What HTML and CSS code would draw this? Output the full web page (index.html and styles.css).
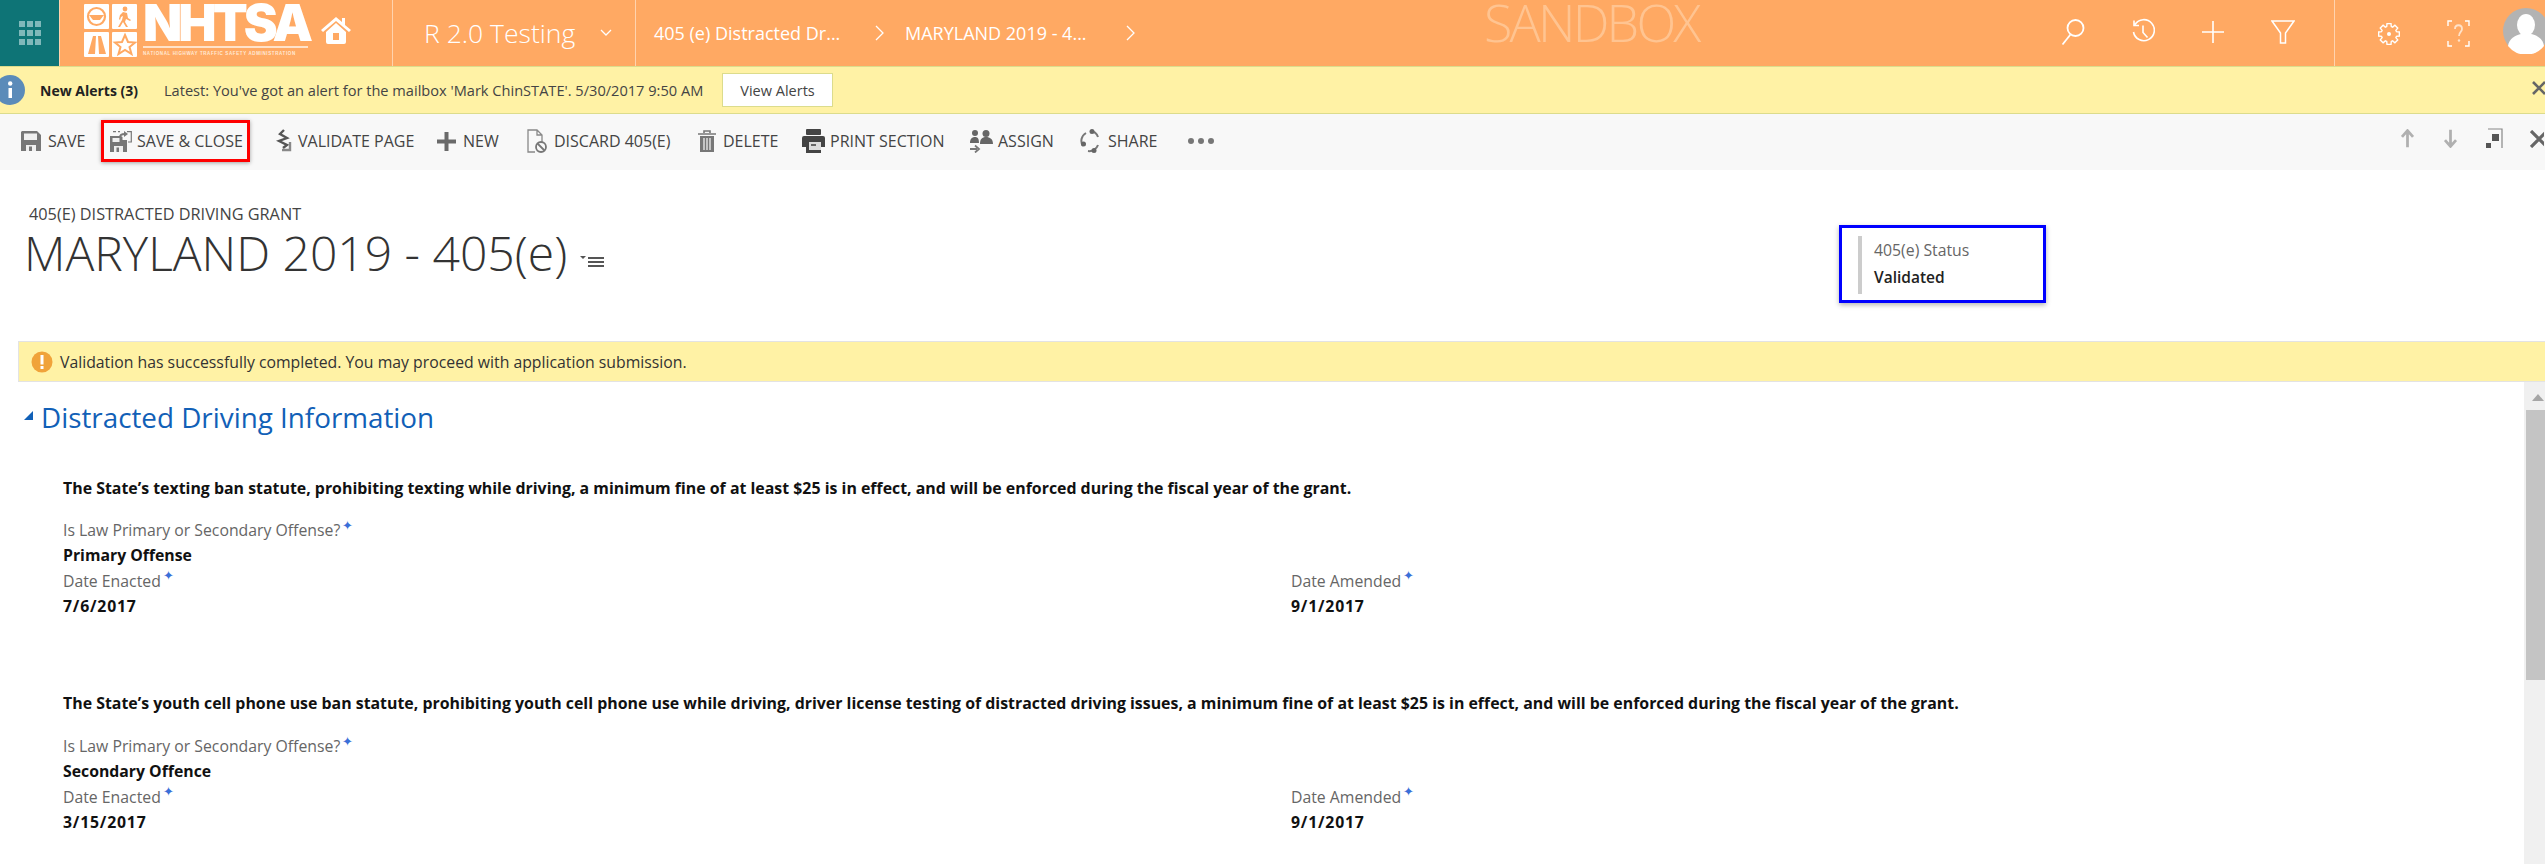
FILE: index.html
```html
<!DOCTYPE html>
<html lang="en">
<head>
    <meta charset="UTF-8">
    <title>MARYLAND 2019 - 405(e)</title>
    <link rel="stylesheet" href="styles.css">
</head>
<body>
    <header class="top-bar">
        <div class="app-tile">
            <svg width="22" height="24" viewBox="0 0 22 24" fill="#7fb8ba">
                <rect x="0" y="0" width="6" height="6"/><rect x="8" y="0" width="6" height="6"/><rect x="16" y="0" width="6" height="6"/>
                <rect x="0" y="9" width="6" height="6"/><rect x="8" y="9" width="6" height="6"/><rect x="16" y="9" width="6" height="6"/>
                <rect x="0" y="18" width="6" height="6"/><rect x="8" y="18" width="6" height="6"/><rect x="16" y="18" width="6" height="6"/>
            </svg>
        </div>
        <div class="logo-area">
            <svg class="logo-signs" width="53" height="53" viewBox="0 0 53 53">
                <rect width="25" height="25" rx="1" fill="#fff"/>
                <rect x="28" width="25" height="25" rx="1" fill="#fff"/>
                <rect y="28" width="25" height="25" rx="1" fill="#fff"/>
                <rect x="28" y="28" width="25" height="25" rx="1" fill="#fff"/>
                <circle cx="12.5" cy="12.5" r="8.5" fill="none" stroke="#ffa963" stroke-width="2.2"/>
                <path d="M5 11h15l-4 5h-7z" fill="#ffa963"/>
                <circle cx="41" cy="5" r="2.4" fill="#ffa963"/>
                <path d="M39 8l4 1 1 5 3 2-1 1-4-2-1 3 3 5h-2l-3-5-3 5h-2l4-7 1-4-2 1-1 3-1-1 1-4z" fill="#ffa963"/>
                <path d="M9 32h3l-1 18H4zM14 32h3l5 18h-7z" fill="#ffa963"/>
                <path d="M41 31l3 7 7 .5-5.500 4.500 2 7-6.500-4-6.500 4 2-7-5.500-4.500 7-.5z" fill="none" stroke="#ffa963" stroke-width="2"/>
            </svg>
            <div class="logo-word">
                <div class="logo-name">NHTSA</div>
                <div class="logo-full">NATIONAL HIGHWAY TRAFFIC SAFETY ADMINISTRATION</div>
            </div>
            <svg class="logo-home" width="32" height="30" viewBox="0 0 32 30">
                <path d="M1 15L16 2l6 5V3h3v7l6 5-2 2L16 6 3 17z" fill="#fff"/>
                <path d="M6 17L16 8l10 9v10a2 2 0 0 1-2 2H8a2 2 0 0 1-2-2zM13 18v7h6v-7z" fill="#fff" fill-rule="evenodd"/>
            </svg>
        </div>
        <div class="area-menu">
            <span>R 2.0 Testing</span>
            <svg width="12" height="8" viewBox="0 0 12 8"><path d="M1 1l5 5 5-5" fill="none" stroke="#fff" stroke-width="1.300"/></svg>
        </div>
        <nav class="crumbs">
            <span class="crumb crumb-first">405 (e) Distracted Dr...</span>
            <svg width="9" height="16" viewBox="0 0 9 16"><path d="M1 1l7 7-7 7" fill="none" stroke="#fff" stroke-width="1.300"/></svg>
            <span class="crumb">MARYLAND 2019 - 4...</span>
            <svg width="9" height="16" viewBox="0 0 9 16"><path d="M1 1l7 7-7 7" fill="none" stroke="#fff" stroke-width="1.300"/></svg>
        </nav>
        <div class="sandbox">SANDBOX</div>
        <div class="top-icons">
            <svg width="24" height="28" viewBox="0 0 24 28"><circle cx="14.500" cy="10" r="8" fill="none" stroke="#fff" stroke-width="1.800"/><path d="M9.500 16.500L1.500 26.500" stroke="#fff" stroke-width="1.800"/></svg>
            <svg width="24" height="28" viewBox="0 0 24 28"><path d="M4 6.500A10.500 10.500 0 1 1 2.500 14M3 2.500v5h5M12 7.500v7l4.500 5" fill="none" stroke="#fff" stroke-width="1.600"/></svg>
            <svg width="24" height="24" viewBox="0 0 24 24"><path d="M12 1v22M1 12h22" stroke="#fff" stroke-width="1.600"/></svg>
            <svg width="24" height="24" viewBox="0 0 24 24"><path d="M1 1h22l-8.500 12v10h-5V13z" fill="none" stroke="#fff" stroke-width="1.500"/></svg>
        </div>
        <div class="top-icons top-icons-right">
            <svg class="gear" width="22" height="22" viewBox="0 0 24 24"><path d="M9.510 3.870L9.810 .71 14.190 .71 14.490 3.870 15.990 4.490 18.430 2.470 21.530 5.570 19.510 8.010 20.130 9.510 23.290 9.810 23.290 14.190 20.130 14.490 19.510 15.990 21.530 18.430 18.430 21.530 15.990 19.510 14.490 20.130 14.190 23.290 9.810 23.290 9.510 20.130 8.010 19.510 5.570 21.530 2.470 18.430 4.490 15.990 3.870 14.490 .71 14.190 .71 9.810 3.870 9.510 4.490 8.010 2.470 5.570 5.570 2.470 8.010 4.490Z" fill="none" stroke="#fff" stroke-width="1.500"/><circle cx="12" cy="12" r="2.200" fill="#fff"/></svg>
            <svg width="23" height="27" viewBox="0 0 23 27"><path d="M5 1H1v5M18 1h4v5M5 26H1v-5M18 26h4v-5" fill="none" stroke="#fff" stroke-width="1.400"/><path d="M8 9c0-5 7-5 7 0 0 3-3 3-3 7" fill="none" stroke="#ffe2c9" stroke-width="1.800"/><circle cx="12" cy="20.500" r="1.200" fill="#ffe2c9"/></svg>
            <svg class="avatar" width="46" height="46" viewBox="0 0 46 46">
                <circle cx="23" cy="23" r="23" fill="#b3b3b3"/>
                <ellipse cx="23" cy="17" rx="9" ry="11" fill="#fff"/>
                <path d="M5 38c1-8 8-11 13-12h10c5 1 12 4 13 12a23 23 0 0 1-36 0z" fill="#fff"/>
            </svg>
        </div>
    </header>

    <div class="alert-bar">
        <svg class="alert-icon" width="32" height="32" viewBox="0 0 32 32">
            <circle cx="10" cy="16" r="15" fill="#5b8bb9"/>
            <rect x="8.500" y="14" width="3.500" height="10" fill="#fff"/>
            <circle cx="10.200" cy="9.500" r="2.200" fill="#fff"/>
        </svg>
        <strong class="alert-title">New Alerts (3)</strong>
        <span class="alert-text">Latest: You've got an alert for the mailbox 'Mark ChinSTATE'. 5/30/2017 9:50 AM</span>
        <button class="alert-btn">View Alerts</button>
        <svg class="alert-close" width="14" height="14" viewBox="0 0 14 14"><path d="M1 1l12 12M13 1L1 13" stroke="#666" stroke-width="2.600"/></svg>
    </div>

    <div class="toolbar">
        <div class="tool tool-save">
            <svg width="20" height="20" viewBox="0 0 20 20"><path d="M1 0h15l4 4v16H0V1z" fill="#777"/><rect x="3" y="2.500" width="13" height="6.500" fill="#f0f0f0"/><rect x="5" y="14" width="10" height="6" fill="#f0f0f0"/><rect x="8" y="15.500" width="3" height="4.500" fill="#777"/></svg>
            <span>SAVE</span>
        </div>
        <div class="tool tool-saveclose">
            <svg width="22" height="21" viewBox="0 0 22 21"><path d="M0 5h11l1.500 1v3H17v12H0z" fill="#777"/><rect x="2.500" y="7" width="7" height="4" fill="#f0f0f0"/><rect x="4" y="15" width="9" height="6" fill="#f0f0f0"/><rect x="6.500" y="16.500" width="2.500" height="4.500" fill="#777"/><path d="M3 .7h3M8 .7h2M17 .7h4.300V11H18" fill="none" stroke="#777" stroke-width="1.200"/><path d="M10 6c0-2 2-3 5-3" fill="none" stroke="#777" stroke-width="1.800"/><path d="M14 0l4 3-4 3z" fill="#777"/></svg>
            <span>SAVE &amp; CLOSE</span>
        </div>
        <div class="tool tool-validate">
            <svg width="20" height="24" viewBox="0 0 20 24"><path d="M8 1L4 5l7 4-8 3 8 4-4 3" fill="none" stroke="#555" stroke-width="2.400"/><path d="M14 13v8H6" fill="none" stroke="#888" stroke-width="2.400"/></svg>
            <span>VALIDATE PAGE</span>
        </div>
        <div class="tool tool-new">
            <svg width="19" height="19" viewBox="0 0 19 19"><path d="M7.500 0h4v7.500H19v4h-7.500V19h-4v-7.500H0v-4h7.500z" fill="#6a6a6a"/></svg>
            <span>NEW</span>
        </div>
        <div class="tool tool-discard">
            <svg width="20" height="24" viewBox="0 0 20 24"><path d="M8 23H1V1h9l5 5v7M10 1v5h5" fill="none" stroke="#888" stroke-width="1.300"/><circle cx="14" cy="18" r="5" fill="none" stroke="#777" stroke-width="1.800"/><path d="M10.500 14.500l7 7" stroke="#777" stroke-width="1.800"/></svg>
            <span>DISCARD 405(E)</span>
        </div>
        <div class="tool tool-delete">
            <svg width="18" height="22" viewBox="0 0 18 22"><path d="M0 4h18M6 3V1h6v2" fill="none" stroke="#777" stroke-width="1.600"/><path d="M2 6h14v16H2z" fill="#777"/><path d="M6 8v12M9 8v12M12 8v12" stroke="#f8f8f8" stroke-width="1.200"/></svg>
            <span>DELETE</span>
        </div>
        <div class="tool tool-print">
            <svg width="23" height="24" viewBox="0 0 23 24"><rect x="4" y="0" width="15" height="6" rx="1" fill="#444"/><path d="M2 7h19a2 2 0 0 1 2 2v9h-4v6H4v-6H0V9a2 2 0 0 1 2-2z" fill="#444"/><rect x="7" y="13" width="12" height="8" fill="#ddd"/><rect x="9" y="15" width="5" height="2" fill="#666"/></svg>
            <span>PRINT SECTION</span>
        </div>
        <div class="tool tool-assign">
            <svg width="23" height="24" viewBox="0 0 23 24"><circle cx="5" cy="4" r="3" fill="#666"/><circle cx="16" cy="4.500" r="3.500" fill="#666"/><path d="M0 14c0-4 2-6 5-6s4 2 4 6zM10 15c0-5 2-7 6-7s7 2 7 7z" fill="#666"/><path d="M0 20h7M5 16.500l4 3.500-4 3.500" fill="none" stroke="#777" stroke-width="1.800"/></svg>
            <span>ASSIGN</span>
        </div>
        <div class="tool tool-share">
            <svg width="21" height="24" viewBox="0 0 21 24"><path d="M6 4a9 9 0 0 0-3 13M8 22a9 9 0 0 0 10-6M18 8a9 9 0 0 0-8-6" fill="none" stroke="#777" stroke-width="2"/><circle cx="12" cy="2.500" r="2.500" fill="#666"/><circle cx="3.500" cy="15" r="2.500" fill="#666"/><circle cx="14" cy="21.500" r="2.500" fill="#666"/></svg>
            <span>SHARE</span>
        </div>
        <div class="tool-more"><i></i><i></i><i></i></div>
        <div class="tool-right">
            <svg width="15" height="19" viewBox="0 0 16 24"><path d="M8 23V3M1 10l7-8 7 8" fill="none" stroke="#b0b0b0" stroke-width="3.500"/></svg>
            <svg width="15" height="19" viewBox="0 0 16 24"><path d="M8 1v20M1 14l7 8 7-8" fill="none" stroke="#b0b0b0" stroke-width="3.500"/></svg>
            <svg width="17" height="21" viewBox="0 0 17 21"><path d="M2 1h14v19" fill="none" stroke="#888" stroke-width="1.200"/><rect x="6" y="6" width="7" height="7" fill="#555"/><rect x="0" y="15" width="5" height="5" fill="#555"/></svg>
            <svg width="14" height="18" viewBox="0 0 14 18"><path d="M1 1l16 16M17 1L1 17" stroke="#666" stroke-width="3.200"/></svg>
        </div>
    </div>

    <section class="record-head">
        <div class="record-title">
            <div class="entity-name">405(E) DISTRACTED DRIVING GRANT</div>
            <h1>
                <span>MARYLAND 2019 - 405(e)</span>
                <svg class="form-menu" width="24" height="14" viewBox="0 0 24 14" fill="#555"><path d="M0 1h6L3 4z"/><rect x="8" y="2" width="16" height="2"/><rect x="8" y="6" width="16" height="2"/><rect x="8" y="10" width="16" height="2"/></svg>
            </h1>
        </div>
        <div class="status-box">
            <div class="status-inner">
                <div class="status-label">405(e) Status</div>
                <div class="status-value">Validated</div>
            </div>
        </div>
    </section>

    <div class="notice">
        <svg width="22" height="22" viewBox="0 0 22 22"><circle cx="11" cy="11" r="10.500" fill="#f0a33a"/><rect x="9.500" y="4" width="3" height="9.500" fill="#fff"/><rect x="9.500" y="15" width="3" height="3" fill="#fff"/></svg>
        <span>Validation has successfully completed. You may proceed with application submission.</span>
    </div>

    <div class="form-wrap">
        <main class="form-body">
            <h2><span class="twisty"></span>Distracted Driving Information</h2>

            <p class="statement">The State’s texting ban statute, prohibiting texting while driving, a minimum fine of at least $25 is in effect, and will be enforced during the fiscal year of the grant.</p>
            <div class="field-label">Is Law Primary or Secondary Offense?<sup>✦</sup></div>
            <div class="field-value">Primary Offense</div>
            <div class="date-row">
                <div>
                    <div class="field-label">Date Enacted<sup>✦</sup></div>
                    <div class="field-value field-date">7/6/2017</div>
                </div>
                <div>
                    <div class="field-label">Date Amended<sup>✦</sup></div>
                    <div class="field-value field-date">9/1/2017</div>
                </div>
            </div>

            <p class="statement statement-next">The State’s youth cell phone use ban statute, prohibiting youth cell phone use while driving, driver license testing of distracted driving issues, a minimum fine of at least $25 is in effect, and will be enforced during the fiscal year of the grant.</p>
            <div class="field-label">Is Law Primary or Secondary Offense?<sup>✦</sup></div>
            <div class="field-value">Secondary Offence</div>
            <div class="date-row">
                <div>
                    <div class="field-label">Date Enacted<sup>✦</sup></div>
                    <div class="field-value field-date">3/15/2017</div>
                </div>
                <div>
                    <div class="field-label">Date Amended<sup>✦</sup></div>
                    <div class="field-value field-date">9/1/2017</div>
                </div>
            </div>
        </main>
        <div class="scrollbar">
            <div class="scroll-arrow"></div>
            <div class="scroll-thumb"></div>
        </div>
    </div>
</body>
</html>
```

FILE: styles.css
```css
* {
    box-sizing: border-box;
}
html, body {
    margin: 0;
    height: 864px;
    overflow: hidden;
}
body {
    font-family: "Open Sans", sans-serif;
    background-color: #fff;
    color: #444;
    display: flex;
    flex-direction: column;
}
svg {
    display: block;
    flex-shrink: 0;
}

/* top bar */
.top-bar {
    position: relative;
    display: flex;
    height: 66px;
    background-color: #ffa963;
    color: #fff;
    flex-shrink: 0;
}
.app-tile {
    width: 60px;
    background-color: #0e7476;
    display: flex;
    align-items: center;
    justify-content: center;
    border-right: 1px solid #ffd3ae;
}
.logo-area {
    width: 332px;
    padding-left: 24px;
    display: flex;
    align-items: flex-start;
}
.logo-signs {
    margin-top: 4px;
}
.logo-word {
    margin-left: 6px;
    width: 165px;
}
.logo-name {
    font-family: "Inter", sans-serif;
    font-weight: 900;
    font-size: 51px;
    line-height: 46px;
    letter-spacing: -3.9px;
    height: 46px;
}
.logo-full {
    border-top: 2px solid #ffe2c9;
    padding-top: 3px;
    font-family: "Liberation Sans", sans-serif;
    font-weight: 700;
    font-size: 4.5px;
    line-height: 6px;
    letter-spacing: 0.62px;
    white-space: nowrap;
    color: #ffe9d6;
}
.logo-home {
    margin: 15px 0 0 12px;
}
.area-menu {
    width: 244px;
    padding-left: 31px;
    border-left: 1px solid #ffd3ae;
    border-right: 1px solid #ffd3ae;
    display: flex;
    align-items: center;
    gap: 25px;
    font-size: 26.5px;
    font-weight: 300;
}
.crumbs {
    display: flex;
    align-items: center;
    font-size: 18px;
    padding-left: 18px;
}
.crumb {
    width: 192px;
    white-space: nowrap;
}
.crumbs svg {
    margin-left: 29px;
    margin-right: 21px;
}
.sandbox {
    position: absolute;
    left: 1484px;
    top: 0;
    font-size: 52px;
    line-height: 44px;
    letter-spacing: -2.8px;
    font-weight: 300;
    color: #ffc491;
}
.top-icons {
    position: absolute;
    left: 2061px;
    top: 20px;
    display: flex;
    gap: 46px;
    align-items: center;
    height: 24px;
}
.top-icons-right {
    left: 2334px;
    top: 0;
    height: 66px;
    width: 211px;
    border-left: 1px solid #ffd3ae;
    padding-left: 43px;
    gap: 47px;
    overflow: hidden;
}
.gear {
    margin-top: 2px;
}
.avatar {
    margin-left: -14px;
    margin-top: -5px;
}

/* alert */
.alert-bar {
    height: 48px;
    flex-shrink: 0;
    display: flex;
    align-items: center;
    background-color: #fff2a5;
    border-top: 1px solid #dcdc8c;
    border-bottom: 1px solid #dcdc8c;
    position: relative;
    font-size: 14px;
}
.alert-title {
    margin-left: 8px;
    font-weight: 700;
    color: #222;
    width: 124px;
}
.alert-text {
    color: #444;
    font-size: 14.6px;
    white-space: nowrap;
    width: 558px;
}
.alert-btn {
    width: 111px;
    height: 34px;
    background-color: #fff;
    border: 1px solid #dcdc8c;
    font-family: inherit;
    font-size: 14.5px;
    color: #444;
    padding: 0;
}
.alert-close {
    position: absolute;
    right: -1px;
    top: 14px;
}

/* command bar */
.toolbar {
    height: 56px;
    flex-shrink: 0;
    display: flex;
    align-items: center;
    background-color: #f8f8f8;
    position: relative;
    padding: 0 0 2px 21px;
    font-size: 16px;
    color: #444;
}
.tool {
    display: flex;
    align-items: center;
    white-space: nowrap;
    gap: 7px;
}
.tool-save { width: 80px; }
.tool-saveclose {
    width: 149px;
    height: 42px;
    margin-right: 26px;
    padding-left: 6px;
    border: 3px solid #f00;
    box-shadow: 0 1px 4px rgba(0, 0, 0, 0.35);
    gap: 5px;
}
.tool-validate { width: 161px; gap: 2px; }
.tool-new { width: 90px; }
.tool-discard { width: 171px; }
.tool-delete { width: 104px; }
.tool-print { width: 168px; gap: 5px; }
.tool-assign { width: 110px; gap: 5px; }
.tool-share { width: 108px; }
.tool-more {
    display: flex;
    gap: 4px;
}
.tool-more i {
    width: 6px;
    height: 6px;
    border-radius: 50%;
    background-color: #777;
}
.tool-right {
    position: absolute;
    left: 2400px;
    top: 14px;
    display: flex;
    gap: 28px;
    align-items: center;
}
.tool-right svg:last-child { margin-left: -1px; }

/* record header */
.record-head {
    height: 171px;
    flex-shrink: 0;
    display: flex;
    align-items: flex-start;
}
.record-title {
    width: 1839px;
    padding: 33px 0 0 24px;
}
.entity-name {
    padding-left: 5px;
    font-size: 16.3px;
    line-height: 22px;
    color: #444;
}
h1 {
    margin: 0;
    display: flex;
    align-items: center;
    font-size: 48px;
    line-height: 56px;
    font-weight: 300;
    color: #333;
}
.form-menu {
    margin: 17px 0 0 13px;
}
.status-box {
    width: 207px;
    height: 78px;
    margin-top: 55px;
    border: 3px solid #00f;
    box-shadow: 0 2px 5px rgba(0, 0, 0, 0.3);
    padding: 8px 0 0 16px;
}
.status-inner {
    height: 58px;
    border-left: 4px solid #ccc;
    padding-left: 12px;
}
.status-label {
    font-size: 15.8px;
    line-height: 28px;
    color: #666;
}
.status-value {
    font-size: 15.5px;
    line-height: 26px;
    font-weight: 600;
    color: #222;
}

/* notice */
.notice {
    height: 41px;
    margin-left: 18px;
    flex-shrink: 0;
    display: flex;
    align-items: center;
    gap: 7px;
    padding-left: 12px;
    background-color: #fff2a5;
    border: 1px solid #e3e3e3;
    border-right: 0;
    font-size: 15.8px;
    color: #333;
}

/* form */
.form-wrap {
    flex: 1;
    display: flex;
    min-height: 0;
}
.form-body {
    flex: 1;
    overflow: hidden;
    padding: 17px 0 0 24px;
}
h2 {
    margin: 0;
    display: flex;
    align-items: center;
    font-size: 27.8px;
    line-height: 36px;
    font-weight: 400;
    color: #1160b7;
}
.twisty {
    width: 0;
    height: 0;
    border-style: solid;
    border-width: 0 0 9px 9px;
    border-color: transparent transparent #1160b7 transparent;
    margin: 0 8px 4px 0;
}
.statement {
    margin: 43px 0 0 39px;
    font-size: 15.9px;
    line-height: 20px;
    font-weight: 700;
    color: #111;
    white-space: nowrap;
}
.statement-next {
    margin-top: 74px;
}
.field-label {
    margin: 20px 0 0 39px;
    font-size: 15.8px;
    line-height: 25px;
    color: #666;
    white-space: nowrap;
}
.statement-next + .field-label {
    margin-top: 21px;
}
.field-value {
    margin-left: 39px;
    font-size: 15.8px;
    line-height: 25.500px;
    font-weight: 700;
    color: #111;
}
.field-date {
    letter-spacing: 0.8px;
}
.field-label sup {
    font-size: 13px;
    line-height: 0;
    color: #3a6fd8;
    margin-left: 2px;
}
.date-row {
    display: grid;
    grid-template-columns: 1228px 1fr;
}
.date-row .field-label {
    margin-top: 0;
}
.scrollbar {
    width: 21px;
    background-color: #f0f0f0;
    padding-left: 2px;
}
.scroll-arrow {
    width: 0;
    height: 0;
    margin: 12px 0 0 6px;
    border-style: solid;
    border-width: 0 6.5px 7px 6.5px;
    border-color: transparent transparent #a6a6a6 transparent;
}
.scroll-thumb {
    margin-top: 9px;
    height: 270px;
    background-color: #c4c4c4;
}
```
